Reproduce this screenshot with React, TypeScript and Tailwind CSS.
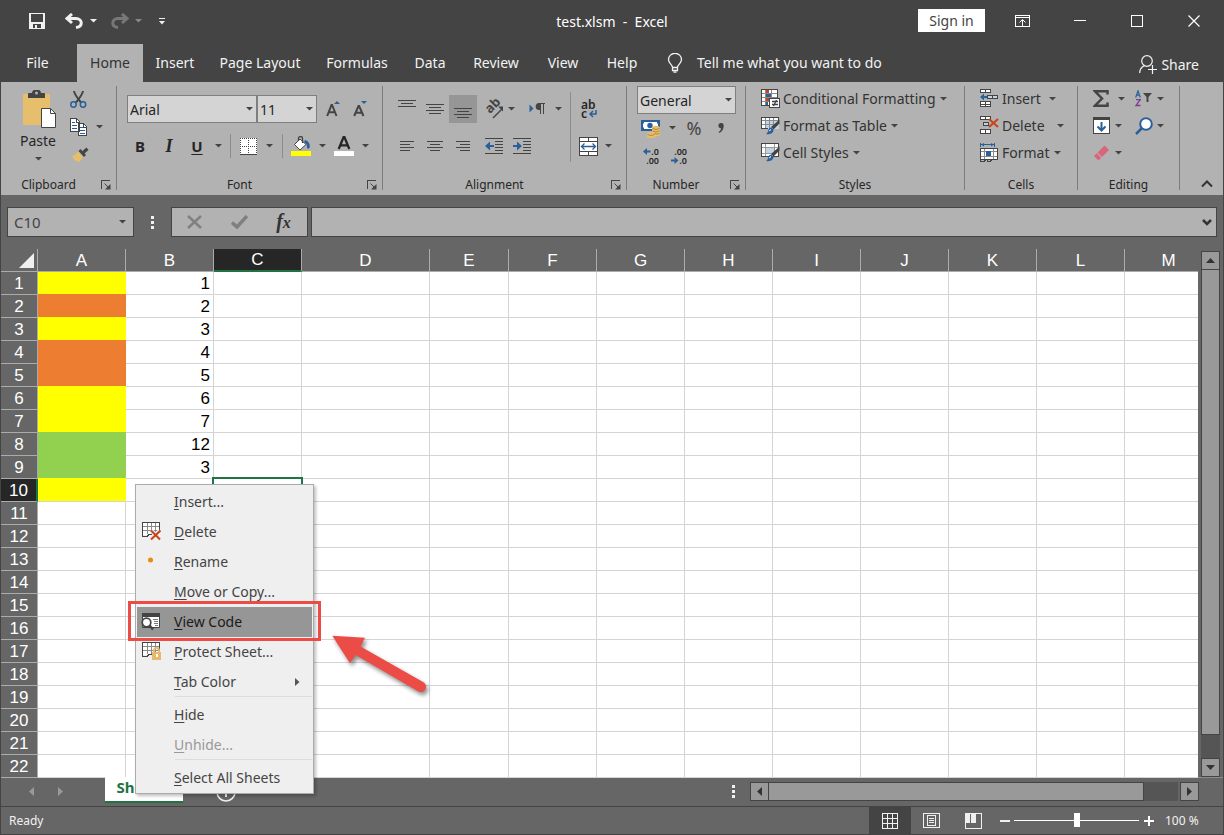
import type { ReactNode } from 'react';

const INK = '#444444';
const BLUE = '#2a6099';

function Svg({ w, h, children, smooth }: { w: number; h: number; children: ReactNode; smooth?: boolean }) {
  return (
    <svg
      width={w}
      height={h}
      viewBox={`0 0 ${w} ${h}`}
      fill="none"
      aria-hidden="true"
      className="shrink-0"
      shapeRendering={smooth ? undefined : 'crispEdges'}
    >
      {children}
    </svg>
  );
}

function Caret({ color = INK }: { color?: string }) {
  return (
    <Svg w={7} h={4} smooth>
      <path d="M0 0h7L3.500 3.500z" fill={color} />
    </Svg>
  );
}

function Tool({ label, className, children }: { label: string; className: string; children: ReactNode }) {
  return (
    <button type="button" aria-label={label} className={`flex shrink-0 items-center justify-center ${className}`}>
      {children}
    </button>
  );
}

function Divider({ className = 'bg-[#8c8c8c]' }: { className?: string }) {
  return <span className={`w-px shrink-0 ${className}`} />;
}

function Group({
  title,
  width,
  launcher,
  children,
}: {
  title: string;
  width: string;
  launcher?: boolean;
  children: ReactNode;
}) {
  return (
    <section aria-label={title} className={`flex shrink-0 pt-1 ${width}`}>
      <div className="flex min-w-0 flex-1 flex-col">
        <div className="h-[91px] shrink-0">{children}</div>
        <div className="flex h-4 items-center">
          <h2 className="flex-1 text-center text-xs leading-4 text-[#262626]">{title}</h2>
          {launcher && (
            <Tool label={`${title} settings`} className="h-4 w-5">
              <Svg w={10} h={10}>
                <path d="M0.500 9V0.500H9" stroke={INK} />
                <path d="M3.500 3.500L8 8" stroke={INK} shapeRendering="auto" />
                <path d="M9.500 4v5.500H4z" fill={INK} shapeRendering="auto" />
              </Svg>
            </Tool>
          )}
        </div>
      </div>
      <Divider className="mb-[5px] bg-[#7c7c7c]" />
    </section>
  );
}

function Combo({ label, value, className }: { label: string; value: string; className: string }) {
  return (
    <span className={`relative shrink-0 ${className}`}>
      <select
        aria-label={label}
        className="h-7 w-full appearance-none border border-[#7f7f7f] bg-[#d4d4d4] px-0.5 pt-0.5 text-sm leading-5 text-[#262626]"
      >
        <option>{value}</option>
      </select>
      <span className="pointer-events-none absolute top-3 right-1">
        <Caret />
      </span>
    </span>
  );
}

function Lines({ rows, h = 19 }: { rows: [number, number, number][]; h?: number }) {
  return (
    <Svg w={18} h={h}>
      {rows.map(([x, y, w]) => (
        <rect key={y} x={x} y={y} width={w} height={1} fill={INK} />
      ))}
    </Svg>
  );
}

function Brush() {
  return (
    <g shapeRendering="auto">
      <path d="M18.500 3.500v4l-6 6-2.500-2.500z" fill={INK} />
      <path d="M10.500 11.500l2 2.300c0 2.700-2.500 5.200-7.500 4.200 1.800-.8 1.600-2 2.200-3.800.4-1.400 1.600-2.700 3.300-2.700z" fill={BLUE} />
      <path d="M8.300 15.300c.2-1 .8-1.500 1.700-1.700" stroke="#fff" />
    </g>
  );
}

function ConditionalIcon() {
  return (
    <Svg w={19} h={19}>
      <path d="M0.500 0.500h16v16h-16z" fill="#fff" stroke={INK} />
      <path d="M1 4.500h15M1 8.500h15M1 12.500h15M4.500 1v15M10.500 1v15" stroke="#8a8a8a" />
      <path d="M5 1h3v3H5zM5 9h3v3H5z" fill="#c8421c" />
      <path d="M5 5h5v3H5zM5 13h2v3H5z" fill={BLUE} />
      <path d="M8.500 9.500h10v9h-10z" fill="#fff" stroke={INK} />
      <path d="M11 12.500h6M11 15.500h6M15.500 11l-3 6" stroke={INK} strokeWidth="1.300" shapeRendering="auto" />
    </Svg>
  );
}

function TableIcon() {
  return (
    <Svg w={19} h={19}>
      <path d="M0.500 1.500h17v11h-17z" fill="#fff" stroke={INK} />
      <path d="M5 5h13v8H5z" fill="#c3d3e6" />
      <path d="M1 4.500h16M1 8.500h16M4.500 2v11M8.500 2v11M12.500 2v11" stroke="#8a8a8a" />
      <path d="M0.500 13V1.500h17V5M0.500 12.500H7" stroke={INK} />
      <Brush />
    </Svg>
  );
}

function CellStyleIcon() {
  return (
    <Svg w={19} h={19}>
      <path d="M0.500 0.500h17v13h-17z" fill="#fff" stroke={INK} />
      <path d="M4.500 4.500h9v6h-9z" fill="#c3d3e6" stroke="#8a8a8a" />
      <path d="M1 4.500h16M4.500 1v12M1 10.500h12M13.500 1v4" stroke="#9a9a9a" />
      <Brush />
    </Svg>
  );
}

function InsertIcon() {
  return (
    <Svg w={19} h={19}>
      <path d="M0.500 0.500h10v3h-10zM0.500 12.500h10v5h-10z" fill="#fff" stroke={INK} />
      <path d="M5.500 1v2M5.500 13v4M1 15.500h9" stroke={INK} />
      <path d="M7.500 6.500h10v3h-10z" fill="#c3d3e6" stroke={INK} />
      <path d="M12.500 7v2" stroke={INK} />
      <path d="M0 8l4-3.500V7h3v2H4v2.500z" fill={BLUE} shapeRendering="auto" />
    </Svg>
  );
}

function DeleteIcon() {
  return (
    <Svg w={19} h={19}>
      <path d="M0.500 0.500h10v3h-10zM0.500 13.500h10v4h-10z" fill="#fff" stroke={INK} />
      <path d="M5.500 1v2M5.500 14v3" stroke={INK} />
      <path d="M3.500 6.500h5v3h-5z" fill="#c3d3e6" stroke={INK} />
      <path d="M9 3l9 8M18 3l-9 8" stroke="#c8421c" strokeWidth="2" shapeRendering="auto" />
    </Svg>
  );
}

function FormatIcon() {
  return (
    <Svg w={19} h={19}>
      <path d="M0.500 0v4M14.500 0v4M1 1.500h13" stroke={BLUE} />
      <path d="M4 0l-3 1.500 3 2zM11 0l3 1.500-3 2z" fill={BLUE} shapeRendering="auto" />
      <path d="M0.500 5.500h17v11h-17z" fill="#fff" stroke={INK} />
      <path d="M1 8.500h16M1 13.500h16M4.500 6v10M13.500 6v10" stroke="#8a8a8a" />
      <path d="M6 8h5v5H6z" fill={BLUE} />
      <path d="M0.500 16v2h4l2-1.500M7 16.500v2h3l2-2" stroke={INK} />
    </Svg>
  );
}

function TextTool({ icon, label, gap }: { icon: ReactNode; label: string; gap: string }) {
  return (
    <button type="button" className="flex h-[27px] items-center text-sm whitespace-nowrap text-[#333333]">
      <span className="mr-[3px]">{icon}</span>
      <span className={gap}>{label}</span>
      <Caret />
    </button>
  );
}

const tabs = [
  { name: 'File', width: 'w-[76px] pr-[3px]' },
  { name: 'Home', width: 'w-[66px]' },
  { name: 'Insert', width: 'w-16' },
  { name: 'Page Layout', width: 'w-[106px]' },
  { name: 'Formulas', width: 'w-[88px]' },
  { name: 'Data', width: 'w-[58px]' },
  { name: 'Review', width: 'w-[74px]' },
  { name: 'View', width: 'w-[60px]' },
  { name: 'Help', width: 'w-[58px]' },
];

function TitleBar() {
  return (
    <header className="grid h-11 grid-cols-[1fr_auto_1fr] items-center pb-[3px] text-white">
      <div className="flex items-center pt-px pl-6">
        <Tool label="Save" className="h-7 w-[26px]">
          <Svg w={16} h={16}>
            <path d="M0 0h16v16H0z" fill="#f0f0f0" />
            <path d="M2 1h12v8H2zM4 11h8v4H4z" fill="#444" />
            <path d="M6 12h2v3H6z" fill="#f0f0f0" />
          </Svg>
        </Tool>
        <Tool label="Undo" className="ml-[11px] h-7 w-[26px]">
          <Svg w={19} h={16} smooth>
            <path d="M7 1L2 5.500 7 10" stroke="#f0f0f0" strokeWidth="3" />
            <path d="M3 5.500h8c6.500 0 7.500 8 0 9" stroke="#f0f0f0" strokeWidth="3" />
          </Svg>
        </Tool>
        <Tool label="Undo list" className="h-7 w-3">
          <Caret color="#f0f0f0" />
        </Tool>
        <Tool label="Redo" className="ml-[7px] h-7 w-[26px]">
          <Svg w={19} h={16} smooth>
            <path d="M12 1l5 4.500-5 4.500" stroke="#777" strokeWidth="3" />
            <path d="M16 5.500H8c-6.500 0-7.500 8 0 9" stroke="#777" strokeWidth="3" />
          </Svg>
        </Tool>
        <Tool label="Redo list" className="h-7 w-3">
          <Caret color="#888" />
        </Tool>
        <Tool label="Customize toolbar" className="ml-3 h-7 w-3">
          <Svg w={6} h={7}>
            <path d="M0 0h6v1H0z" fill="#f0f0f0" />
            <path d="M0 3h6L3 6.500z" fill="#f0f0f0" shapeRendering="auto" />
          </Svg>
        </Tool>
      </div>
      <h1 className="pt-0.5 text-sm leading-5 whitespace-pre">test.xlsm  -  Excel</h1>
      <div className="flex items-center justify-end">
        <button type="button" className="mr-2 h-[23px] w-[67px] bg-white text-sm leading-5 text-[#444444]">
          Sign in
        </button>
        <Tool label="Ribbon display options" className="h-7 w-[59px]">
          <Svg w={15} h={12}>
            <path d="M0.500 0.500h14v11h-14zM1 2.500h13" stroke="#fff" />
            <path d="M7.500 5v6" stroke="#fff" />
            <path d="M4.500 7.500l3-3 3 3" stroke="#fff" shapeRendering="auto" />
          </Svg>
        </Tool>
        <Tool label="Minimize" className="h-7 w-14">
          <Svg w={12} h={1}>
            <path d="M0 0h12v1H0z" fill="#fff" />
          </Svg>
        </Tool>
        <Tool label="Maximize" className="h-7 w-[57px]">
          <Svg w={12} h={12}>
            <path d="M0.500 0.500h11v11h-11z" stroke="#fff" />
          </Svg>
        </Tool>
        <Tool label="Close" className="mr-px h-7 w-[58px]">
          <Svg w={12} h={12} smooth>
            <path d="M0.500 0.500l11 11M11.500 0.500l-11 11" stroke="#fff" strokeWidth="1.200" />
          </Svg>
        </Tool>
      </div>
    </header>
  );
}

function TabBar() {
  return (
    <nav aria-label="Ribbon tabs" className="flex h-[38px] pl-px text-sm text-[#f2f2f2]">
      {tabs.map((tab) => (
        <button
          key={tab.name}
          type="button"
          className={`shrink-0 whitespace-nowrap ${tab.width} ${tab.name === 'Home' ? 'bg-[#b2b2b2] text-[#333333]' : ''}`}
        >
          {tab.name}
        </button>
      ))}
      <button type="button" className="ml-4 flex items-center gap-3.5 whitespace-nowrap">
        <Svg w={16} h={20} smooth>
          <path
            d="M5.500 14.500c0-3-4-4-4-8a6.500 6.200 0 0 1 13 0c0 4-4 5-4 8zM5.500 14.500h5v3h-5zM6.500 19.200h3"
            stroke="#f2f2f2"
            strokeWidth="1.300"
          />
        </Svg>
        Tell me what you want to do
      </button>
      <button type="button" className="mr-[25px] ml-auto flex items-center gap-1 pt-[3px] whitespace-nowrap">
        <Svg w={18} h={19} smooth>
          <circle cx="8" cy="6" r="5.300" stroke="#f2f2f2" strokeWidth="1.200" />
          <path d="M0.700 18c0-3.500 1.800-6 4.600-7.300M9 14.500h9M13.500 10v9" stroke="#f2f2f2" strokeWidth="1.200" />
        </Svg>
        Share
      </button>
    </nav>
  );
}

function Ribbon() {
  return (
    <div className="flex h-[113px] bg-[#b2b2b2] text-[#262626]">
      <Group title="Clipboard" width="w-[116px]" launcher>
        <div className="flex pl-4">
          <button type="button" className="flex w-[42px] flex-col items-center pt-1 text-sm leading-5">
            <Svg w={36} h={40} smooth>
              <path d="M3 5a1 1 0 0 1 1-1h25a1 1 0 0 1 1 1v29a1 1 0 0 1-1 1H4a1 1 0 0 1-1-1z" fill="#e6be6c" />
              <path d="M8 8V4a1 1 0 0 1 1-1h3a4.500 3.500 0 0 1 9 0h3a1 1 0 0 1 1 1v4z" fill={INK} />
              <circle cx="16.500" cy="3" r="1.500" fill="#b2b2b2" />
              <path d="M21.500 18.500h9l5 5v14h-14z" fill="#fff" stroke={INK} />
              <path d="M30.500 18.500v5h5" stroke={INK} />
            </Svg>
            <span className="mt-px mb-1.5">Paste</span>
            <Caret />
          </button>
          <div className="-mt-px flex flex-col pl-[9px]">
            <Tool label="Cut" className="h-[27px] w-5">
              <Svg w={17} h={18} smooth>
                <path d="M4 1c.3 3 2.500 6 7 11.500M13 1c-.3 3-2.500 6-7 11.500" stroke={INK} strokeWidth="2" />
                <circle cx="3.500" cy="14.500" r="2.700" stroke={BLUE} strokeWidth="1.500" />
                <circle cx="13" cy="14.500" r="2.700" stroke={BLUE} strokeWidth="1.500" />
              </Svg>
            </Tool>
            <div className="flex">
              <Tool label="Copy" className="h-[29px] w-[22px]">
                <Svg w={18} h={18}>
                  <path d="M0.500 0.500h6l3 3v10h-9zM8.500 5.500h5l3 3v9h-8z" fill="#fff" stroke={INK} />
                  <path d="M2 4.500h3M2 7.500h5M2 10.500h5M10 9.500h3M10 12.500h5M10 15.500h5" stroke={BLUE} />
                  <path d="M6.500 1v3H9M13.500 6v3H16" stroke={INK} />
                </Svg>
              </Tool>
              <Tool label="Copy options" className="h-[29px] w-[19px]">
                <Caret />
              </Tool>
            </div>
            <Tool label="Format painter" className="h-[27px] w-[24px]">
              <Svg w={18} h={16} smooth>
                <path d="M7 4.500l5 6-4 4.500c-3-.5-5.500-2.500-7-6 2.500-.5 4-2 6-4.500z" fill="#e6be6c" />
                <path d="M7.500 4l2-2 5.500 6-2 2zM11.500 4l4-3.500L17.500 3l-4 3.500z" fill={INK} />
              </Svg>
            </Tool>
          </div>
        </div>
      </Group>

      <Group title="Font" width="w-[266px]" launcher>
        <div className="flex items-center pt-[9px] pl-2.5">
          <Combo label="Font family" value="Arial" className="w-[130px]" />
          <Combo label="Font size" value="11" className="w-[60px]" />
          <Tool label="Grow font" className="ml-0.5 h-7 w-[27px]">
            <Svg w={14} h={17} smooth>
              <path d="M1.200 15L5.500 4h.6L10.500 15M3 11.300h6" stroke={INK} strokeWidth="2" />
              <path d="M8 3l3-3 3 3z" fill={BLUE} />
            </Svg>
          </Tool>
          <Tool label="Shrink font" className="h-7 w-[27px]">
            <Svg w={14} h={17} smooth>
              <path d="M1.200 15L5.500 5h.6L10.500 15M3 11.800h6" stroke={INK} strokeWidth="2" />
              <path d="M8 0l3 3 3-3z" fill={BLUE} />
            </Svg>
          </Tool>
        </div>
        <div className="flex items-center pt-[9px] pl-[9px] text-[15px] leading-5">
          <Tool label="Bold" className="h-7 w-7">
            <b>B</b>
          </Tool>
          <Tool label="Italic" className="h-7 w-[30px] font-['Liberation_Serif',serif] text-lg">
            <b>
              <i>I</i>
            </b>
          </Tool>
          <Tool label="Underline" className="h-7 w-[26px]">
            <b className="underline underline-offset-2">U</b>
          </Tool>
          <Tool label="Underline style" className="h-7 w-4">
            <Caret />
          </Tool>
          <Divider className="ml-1 h-6 bg-[#8c8c8c]" />
          <Tool label="Borders" className="ml-[5px] h-7 w-[25px]">
            <Svg w={17} h={17}>
              <path d="M0 0h17v17H0z" fill="#fff" />
              <path d="M0 0.500h17M0 8.500h17M0.500 0v17M8.500 0v17M16.500 0v17" stroke={INK} strokeDasharray="1 1" />
              <path d="M0 16h17v1H0z" fill={INK} />
            </Svg>
          </Tool>
          <Tool label="Border style" className="h-7 w-[17px]">
            <Caret />
          </Tool>
          <Divider className="ml-1 h-6 bg-[#8c8c8c]" />
          <Tool label="Fill color" className="ml-[5px] h-7 w-[26px]">
            <Svg w={20} h={20} smooth>
              <path d="M0 15h20v5H0z" fill="#ffff00" />
              <path d="M14 4c4 1 5.500 5 4.500 8-1.500 1.500-2.500.5-2.500-1 0-3-1.500-4-3-5z" fill={BLUE} />
              <path d="M9 3l6 5.500-6 5.500-5.500-5.500z" fill="#fff" stroke={INK} />
              <path d="M7.500 5V2a2 1.500 0 0 1 4 0v5" stroke={INK} strokeWidth="1.300" />
            </Svg>
          </Tool>
          <Tool label="Fill color list" className="h-7 w-4">
            <Caret />
          </Tool>
          <Tool label="Font color" className="h-7 w-7">
            <Svg w={20} h={20} smooth>
              <path d="M0 15h20v5H0z" fill="#fff" />
              <path d="M4.700 13L9.600 1h.8L15.300 13M6.800 9.300h6.400" stroke="#262626" strokeWidth="2.300" />
            </Svg>
          </Tool>
          <Tool label="Font color list" className="h-7 w-3.5">
            <Caret />
          </Tool>
        </div>
      </Group>

      <Group title="Alignment" width="w-[244px]" launcher>
        <div className="flex pl-2.5">
          <div className="flex w-[177px] flex-col gap-[9px] pt-[9px]">
            <div className="flex items-center">
              <Tool label="Top align" className="h-7 w-7">
                <Lines rows={[[0, 0, 18], [3, 3, 12], [0, 6, 18]]} />
              </Tool>
              <Tool label="Middle align" className="h-7 w-7">
                <Lines rows={[[0, 4, 18], [3, 7, 12], [0, 10, 18], [3, 13, 12]]} />
              </Tool>
              <Tool label="Bottom align" className="h-7 w-7 bg-[#969696]">
                <Lines rows={[[0, 8, 18], [3, 11, 12], [0, 14, 18], [3, 17, 12]]} />
              </Tool>
              <Tool label="Orientation" className="ml-[3px] h-7 w-7">
                <svg width="20" height="20" viewBox="0 0 20 20" aria-hidden="true" className="overflow-visible">
                  <text transform="translate(6 15) rotate(-45)" fontSize="13" fontWeight="700" fill={INK}>
                    ab
                  </text>
                  <path d="M9 19L18 10" stroke={INK} strokeWidth="1.500" fill="none" />
                  <path d="M19 7.500v5l-5-5z" fill={INK} />
                </svg>
              </Tool>
              <Tool label="Orientation list" className="h-7 w-[7px]">
                <Caret />
              </Tool>
              <Tool label="Text direction" className="ml-2 h-7 w-7">
                <Svg w={16} h={12}>
                  <path d="M0.500 1.500v8l4-4z" fill={BLUE} shapeRendering="auto" />
                  <path d="M11 0v7h-1C5.500 7 5.500 0 10 0z" fill={INK} shapeRendering="auto" />
                  <path d="M10 0.500h6M11.500 0v11M14.500 0v11" stroke={INK} />
                </Svg>
              </Tool>
              <Tool label="Text direction list" className="h-7 w-3.5">
                <Caret />
              </Tool>
            </div>
            <div className="flex items-center">
              <Tool label="Align left" className="h-7 w-7">
                <Lines rows={[[2, 4, 14], [2, 7, 10], [2, 10, 14], [2, 13, 10]]} />
              </Tool>
              <Tool label="Center" className="h-7 w-7">
                <Lines rows={[[1, 4, 16], [4, 7, 10], [1, 10, 16], [4, 13, 10]]} />
              </Tool>
              <Tool label="Align right" className="h-7 w-7">
                <Lines rows={[[2, 4, 14], [6, 7, 10], [2, 10, 14], [6, 13, 10]]} />
              </Tool>
              <Tool label="Decrease indent" className="ml-[3px] h-7 w-7">
                <Svg w={18} h={16}>
                  <path d="M0 0.500h18M10 3.500h8M10 6.500h8M10 9.500h8M10 12.500h8M0 15.500h18" stroke={INK} />
                  <path d="M0 8l5-4.500V7h4v2H5v3.500z" fill={BLUE} shapeRendering="auto" />
                </Svg>
              </Tool>
              <Tool label="Increase indent" className="h-7 w-7">
                <Svg w={18} h={16}>
                  <path d="M0 0.500h18M10 3.500h8M10 6.500h8M10 9.500h8M10 12.500h8M0 15.500h18" stroke={INK} />
                  <path d="M9 8L4 3.500V7H0v2h4v3.500z" fill={BLUE} shapeRendering="auto" />
                </Svg>
              </Tool>
            </div>
          </div>
          <Divider className="mt-1.5 h-[70px] bg-[#8c8c8c]" />
          <div className="flex flex-col gap-[9px] pt-[9px] pl-1.5">
            <button type="button" aria-label="Wrap text" className="h-7 w-6 pl-1 text-left text-xs leading-[9px] font-semibold">
              <span className="block">ab</span>
              <span className="flex items-center gap-0.5">
                c
                <Svg w={8} h={8} smooth>
                  <path d="M7 0v4H1M4 1L1 4l3 3" stroke={BLUE} strokeWidth="1.500" />
                </Svg>
              </span>
            </button>
            <div className="flex">
              <Tool label="Merge and center" className="h-7 w-[22px]">
                <Svg w={19} h={19}>
                  <path d="M0.500 0.500h18v18h-18z" fill="#fff" stroke={INK} />
                  <path d="M1 4.500h17M1 14.500h17M9.500 1v4M9.500 14v4" stroke={INK} />
                  <path d="M3 9.500h13M5.500 6.500l-3 3 3 3M13.500 6.500l3 3-3 3" stroke={BLUE} shapeRendering="auto" strokeWidth="1.300" />
                </Svg>
              </Tool>
              <Tool label="Merge list" className="h-7 w-[19px]">
                <Caret />
              </Tool>
            </div>
          </div>
        </div>
      </Group>

      <Group title="Number" width="w-[119px]" launcher>
        <div className="flex pl-2.5">
          <Combo label="Number format" value="General" className="w-[99px]" />
        </div>
        <div className="flex items-center pl-2.5 leading-5">
          <Tool label="Currency" className="h-7 w-[27px]">
            <Svg w={19} h={19} smooth>
              <path d="M0 1h19v11H0z" fill={BLUE} />
              <path d="M3 3h13v1l1 1v3l-1 1v1H3V9L2 8V5l1-1z" fill="#fff" />
              <circle cx="9" cy="6.500" r="2.700" fill={BLUE} />
              <path d="M11 8.500a4 1.700 0 0 1 8 0v7a4 1.700 0 0 1-8 0zM6 14.500a4 1.500 0 0 1 8 0v3a4 1.500 0 0 1-8 0z" fill="#e6be6c" />
              <path d="M11.500 9.500q3.500 2 7 0M11.500 12q3.500 2 7 0M13.500 14.500q3 1 5 0M6.500 15.500q3.500 2 7 0" stroke="#b58a42" />
            </Svg>
          </Tool>
          <Tool label="Currency list" className="h-7 w-4">
            <Caret />
          </Tool>
          <Tool label="Percent style" className="h-7 w-7 text-lg text-[#444444]">
            %
          </Tool>
          <Tool label="Comma style" className="h-7 w-[26px]">
            <Svg w={6} h={10} smooth>
              <path d="M3 0a2.500 2.500 0 0 1 2.700 2.700C5.700 6 4 9 1 10L.5 9C2.300 8 3 6.500 3 5.200A2.500 2.500 0 0 1 3 0z" fill={INK} />
            </Svg>
          </Tool>
        </div>
        <div className="flex items-center pl-2.5 text-[9px] leading-[9px] font-semibold">
          <button type="button" aria-label="Increase decimal" className="flex h-7 w-7 flex-col items-end justify-center pr-1.5">
            <span className="flex items-center">
              <Svg w={8} h={7} smooth>
                <path d="M0 3.500L4 0v2.500h3.500v2H4V7z" fill={BLUE} />
              </Svg>
              .0
            </span>
            <span>.00</span>
          </button>
          <button type="button" aria-label="Decrease decimal" className="flex h-7 w-7 flex-col items-end justify-center pr-1.5">
            <span>.00</span>
            <span className="flex items-center">
              <Svg w={8} h={7} smooth>
                <path d="M7.500 3.500L3.500 0v2.500H0v2h3.500V7z" fill={BLUE} />
              </Svg>
              .0
            </span>
          </button>
        </div>
      </Group>

      <Group title="Styles" width="w-[219px]">
        <div className="-mt-px flex flex-col pl-[15px]">
          <TextTool icon={<ConditionalIcon />} label="Conditional Formatting" gap="mr-1" />
          <TextTool icon={<TableIcon />} label="Format as Table" gap="mr-1" />
          <TextTool icon={<CellStyleIcon />} label="Cell Styles" gap="mr-1" />
        </div>
      </Group>

      <Group title="Cells" width="w-[113px]">
        <div className="-mt-px flex flex-col pl-[15px]">
          <TextTool icon={<InsertIcon />} label="Insert" gap="mr-2" />
          <TextTool icon={<DeleteIcon />} label="Delete" gap="mr-3" />
          <TextTool icon={<FormatIcon />} label="Format" gap="mr-1" />
        </div>
      </Group>

      <Group title="Editing" width="w-[102px]">
        <div className="-mt-px grid grid-cols-[36px_auto] justify-start gap-x-2 pl-[9px]">
          <div className="flex">
            <Tool label="AutoSum" className="h-[27px] w-7">
              <Svg w={16} h={17} smooth>
                <path d="M14.500 4.500V1.300H2L9 8.500l-7 7.200h12.500v-3.200" stroke={INK} strokeWidth="2.500" />
              </Svg>
            </Tool>
            <Tool label="AutoSum list" className="h-[27px] w-3">
              <Caret />
            </Tool>
          </div>
          <div className="flex">
            <Tool label="Sort and filter" className="h-[27px] w-[26px]">
              <Svg w={18} h={17} smooth>
                <path d="M0.700 7.500L3 .8 5.300 7.500M1.500 5.200h3" stroke={BLUE} strokeWidth="1.200" />
                <path d="M1 9.600h4.200L1 15.500h4.500" stroke="#7b3f98" strokeWidth="1.300" />
                <path d="M8 3h9l-3.500 4v5h-2V7z" fill={INK} />
              </Svg>
            </Tool>
            <Tool label="Sort list" className="h-[27px] w-[7px]">
              <Caret />
            </Tool>
          </div>
          <div className="flex">
            <Tool label="Fill" className="h-[27px] w-7">
              <Svg w={17} h={17}>
                <path d="M0.500 0.500h16v16h-16z" fill="#fff" stroke={INK} />
                <path d="M0 0h17v3H0z" fill={INK} />
                <path d="M8.500 5v8M4.500 9.500l4 4 4-4" stroke={BLUE} strokeWidth="2" shapeRendering="auto" />
              </Svg>
            </Tool>
            <Tool label="Fill list" className="h-[27px] w-[7px]">
              <Caret />
            </Tool>
          </div>
          <div className="flex">
            <Tool label="Find and select" className="h-[27px] w-[26px]">
              <Svg w={18} h={18} smooth>
                <circle cx="11" cy="7" r="5.800" fill="#fff" stroke={BLUE} strokeWidth="2" />
                <path d="M6.500 11.500L1 17" stroke={BLUE} strokeWidth="2.500" />
              </Svg>
            </Tool>
            <Tool label="Find list" className="h-[27px] w-[7px]">
              <Caret />
            </Tool>
          </div>
          <div className="flex">
            <Tool label="Clear" className="h-[27px] w-7">
              <Svg w={17} h={16} smooth>
                <path d="M11.500 .5l4.500 4.500-7 7L4.500 7.500zM3.700 8.300l4.500 4.500L5.500 15.500 1 11z" fill="#d9657b" />
              </Svg>
            </Tool>
            <Tool label="Clear list" className="h-[27px] w-[7px]">
              <Caret />
            </Tool>
          </div>
        </div>
      </Group>

      <div className="flex flex-1 items-end justify-end pr-2 pb-[3px]">
        <Tool label="Collapse the ribbon" className="h-4 w-4">
          <Svg w={12} h={8} smooth>
            <path d="M1 6.500l5-5 5 5" stroke="#333" strokeWidth="2" />
          </Svg>
        </Tool>
      </div>
    </div>
  );
}

function Dots() {
  return (
    <Svg w={3} h={13}>
      <path d="M0 0h3v3H0zM0 5h3v3H0zM0 10h3v3H0z" fill="#f0f0f0" />
    </Svg>
  );
}

function FormulaBar() {
  return (
    <div className="flex h-[54px] items-center px-1.5">
      <span className="relative w-[127px] shrink-0">
        <input
          aria-label="Name box"
          defaultValue="C10"
          className="block h-[30px] w-full border border-[#444444] bg-[#b2b2b2] px-1.5 text-[15px] text-[#444444]"
        />
        <span className="pointer-events-none absolute top-[13px] right-2">
          <Caret />
        </span>
      </span>
      <span className="flex w-[37px] shrink-0 justify-center">
        <Dots />
      </span>
      <div className="flex h-[30px] w-[137px] shrink-0 items-center border border-[#444444] bg-[#b2b2b2]">
        <Tool label="Cancel" className="h-7 w-11">
          <Svg w={15} h={14} smooth>
            <path d="M1 1l13 12M14 1L1 13" stroke="#808080" strokeWidth="2.500" />
          </Svg>
        </Tool>
        <Tool label="Enter" className="h-7 w-[46px]">
          <Svg w={17} h={14} smooth>
            <path d="M1 7.500l5 4.500L16 1" stroke="#808080" strokeWidth="3.500" />
          </Svg>
        </Tool>
        <Tool label="Insert function" className="h-7 flex-1 pr-0.5 font-['Liberation_Serif',serif] text-xl leading-6 text-[#333333]">
          <b>
            <i>
              f<span className="text-base">x</span>
            </i>
          </b>
        </Tool>
      </div>
      <span className="relative ml-[3px] flex-1">
        <input aria-label="Formula" className="block h-[30px] w-full border border-[#444444] bg-[#b2b2b2] px-2 text-sm" />
        <span className="pointer-events-none absolute top-3 right-[5px]">
          <Svg w={10} h={7} smooth>
            <path d="M1 1l4 4 4-4" stroke="#333" strokeWidth="2.500" />
          </Svg>
        </span>
      </span>
    </div>
  );
}

const columns = [
  { name: 'A', width: 'w-[88px]' },
  { name: 'B', width: 'w-[88px]' },
  { name: 'C', width: 'w-[88px]' },
  { name: 'D', width: 'w-32' },
  { name: 'E', width: 'w-[79px]' },
  { name: 'F', width: 'w-[88px]' },
  { name: 'G', width: 'w-[88px]' },
  { name: 'H', width: 'w-[88px]' },
  { name: 'I', width: 'w-[88px]' },
  { name: 'J', width: 'w-[88px]' },
  { name: 'K', width: 'w-[88px]' },
  { name: 'L', width: 'w-[88px]' },
  { name: 'M', width: 'w-[88px]' },
];

const YELLOW = 'bg-[#ffff00]';
const ORANGE = 'bg-[#ed7d31]';
const GREEN = 'bg-[#92d050]';

const rows: { fill?: string; edge?: string; value?: string }[] = [
  { fill: YELLOW, edge: 'border-[#ed7d31]', value: '1' },
  { fill: ORANGE, edge: 'border-[#ffff00]', value: '2' },
  { fill: YELLOW, edge: 'border-[#ed7d31]', value: '3' },
  { fill: ORANGE, edge: 'border-[#ed7d31]', value: '4' },
  { fill: ORANGE, edge: 'border-[#ffff00]', value: '5' },
  { fill: YELLOW, edge: 'border-[#ffff00]', value: '6' },
  { fill: YELLOW, edge: 'border-[#92d050]', value: '7' },
  { fill: GREEN, edge: 'border-[#92d050]', value: '12' },
  { fill: GREEN, edge: 'border-[#ffff00]', value: '3' },
  { fill: YELLOW, edge: 'border-[#d4d4d4]' },
  ...Array.from({ length: 12 }, () => ({})),
];

const CELL = 'border-r border-b border-[#d4d4d4] p-0';

function Grid() {
  return (
    <div className="min-w-0 flex-1 overflow-hidden">
      <table className="w-[1176px] table-fixed border-separate border-spacing-0 bg-white font-['Liberation_Sans',Arial,sans-serif] text-[17px] leading-5 text-black">
        <colgroup>
          <col className="w-[37px]" />
          {columns.map((c) => (
            <col key={c.name} className={c.width} />
          ))}
        </colgroup>
        <thead>
          <tr className="h-[23px] bg-[#666666] text-white">
            <td className="border-r border-b border-[#ababab] p-0">
              <span className="flex justify-end pr-[3px]">
                <Svg w={15} h={15} smooth>
                  <path d="M15 0v15H0z" fill="#f0f0f0" />
                </Svg>
              </span>
            </td>
            {columns.map((c) => (
              <th
                key={c.name}
                scope="col"
                className={
                  c.name === 'C'
                    ? 'border-r border-b-2 border-r-[#ababab] border-b-[#217346] bg-[#262626] p-0 pt-px leading-5 font-normal'
                    : 'border-r border-b border-[#ababab] p-0 pt-0.5 font-normal'
                }
              >
                {c.name}
              </th>
            ))}
          </tr>
        </thead>
        <tbody>
          {rows.map((row, i) => (
            <tr key={i} className="h-[23px]">
              <th
                scope="row"
                className={
                  i === 9
                    ? 'border-r-2 border-b border-r-[#217346] border-b-[#ababab] bg-[#262626] p-0 pt-0.5 font-normal text-white'
                    : 'border-r border-b border-[#ababab] bg-[#666666] p-0 pt-0.5 font-normal text-white'
                }
              >
                {i + 1}
              </th>
              {columns.map((c) => {
                if (c.name === 'A') {
                  return row.fill ? (
                    <td key="A" className="p-0">
                      <div className={`h-[23px] border-b ${row.fill} ${row.edge}`} />
                    </td>
                  ) : (
                    <td key="A" className={CELL} />
                  );
                }
                if (c.name === 'B') {
                  return (
                    <td key="B" className="border-r border-b border-[#d4d4d4] p-0 pt-0.5 text-right">
                      <span className="pr-[3px]">{row.value}</span>
                    </td>
                  );
                }
                if (c.name === 'C' && i === 9) {
                  return (
                    <td key="C" className={`${CELL} relative`}>
                      <span className="absolute -inset-0.5 border-2 border-[#217346]" />
                    </td>
                  );
                }
                return <td key={c.name} className={CELL} />;
              })}
            </tr>
          ))}
        </tbody>
      </table>
    </div>
  );
}

const SCROLL_BUTTON = 'h-[19px] w-[19px] border border-[#444444] bg-[#999999]';

function VerticalScroll() {
  return (
    <div className="ml-[3px] flex w-[19px] shrink-0 flex-col pt-0.5 pb-px">
      <Tool label="Scroll up" className={SCROLL_BUTTON}>
        <Svg w={9} h={5} smooth>
          <path d="M4.500 0L9 5H0z" fill="#333" />
        </Svg>
      </Tool>
      <div className="flex flex-1 flex-col bg-[#555555] pb-[23px]">
        <div className="-mt-px flex-1 border border-[#444444] bg-[#999999]" />
      </div>
      <Tool label="Scroll down" className={SCROLL_BUTTON}>
        <Svg w={9} h={5} smooth>
          <path d="M4.500 5L0 0h9z" fill="#333" />
        </Svg>
      </Tool>
    </div>
  );
}

function SheetBar() {
  return (
    <div className="-mt-px flex h-[29px] items-start border-t border-[#8c8c8c] bg-[#666666]">
      <Tool label="Previous sheet" className="ml-4 h-[27px] w-[29px]">
        <Svg w={5} h={9} smooth>
          <path d="M5 0v9L0 4.500z" fill="#999" />
        </Svg>
      </Tool>
      <Tool label="Next sheet" className="h-[27px] w-[29px]">
        <Svg w={5} h={9} smooth>
          <path d="M0 0v9l5-4.500z" fill="#999" />
        </Svg>
      </Tool>
      <button
        type="button"
        className="-mt-px ml-[30px] h-[26px] w-[78px] border-b-2 border-[#217346] bg-white pr-1 pb-1 text-[15px] leading-5 font-bold text-[#217346]"
      >
        Sheet1
      </button>
      <Tool label="New sheet" className="ml-[30px] h-[27px] w-[26px]">
        <Svg w={20} h={20} smooth>
          <circle cx="10" cy="10" r="9" stroke="#f0f0f0" strokeWidth="1.500" />
          <path d="M10 5v10M5 10h10" stroke="#f0f0f0" strokeWidth="2" />
        </Svg>
      </Tool>
      <div className="ml-auto flex w-[491px] items-center pt-1">
        <Dots />
        <Tool label="Scroll left" className={`ml-[15px] ${SCROLL_BUTTON}`}>
          <Svg w={5} h={9} smooth>
            <path d="M5 0v9L0 4.500z" fill="#333" />
          </Svg>
        </Tool>
        <div className="h-[19px] flex-1 bg-[#555555] pr-[34px]">
          <div className="-ml-px h-full border border-[#444444] bg-[#999999]" />
        </div>
        <Tool label="Scroll right" className={`mr-6 ml-0.5 ${SCROLL_BUTTON}`}>
          <Svg w={5} h={9} smooth>
            <path d="M0 0v9l5-4.500z" fill="#333" />
          </Svg>
        </Tool>
      </div>
    </div>
  );
}

function StatusBar() {
  return (
    <footer className="flex h-[29px] items-center border-y border-[#444444] text-[#f2f2f2]">
      <p className="flex-1 pl-2 text-xs">Ready</p>
      <Tool label="Normal view" className="h-full w-[42px] bg-[#444444]">
        <Svg w={16} h={16}>
          <path d="M0.500 0.500h15v15h-15zM0 5.500h16M0 10.500h16M5.500 0v16M10.500 0v16" stroke="#f0f0f0" />
        </Svg>
      </Tool>
      <Tool label="Page layout view" className="h-full w-[41px]">
        <Svg w={17} h={15}>
          <path d="M0.500 0.500h16v14h-16zM4.500 2.500h8v10h-8zM6 5.500h5M6 7.500h5M6 9.500h5" stroke="#f0f0f0" />
        </Svg>
      </Tool>
      <Tool label="Page break preview" className="h-full w-[43px]">
        <Svg w={17} h={16}>
          <path d="M0.500 0.500h16v15h-16z" stroke="#f0f0f0" />
          <path d="M0 0h5v10H0zM6 0h5v10H6z" fill="#f0f0f0" />
        </Svg>
      </Tool>
      <Tool label="Zoom out" className="h-full w-[19px]">
        <Svg w={10} h={2}>
          <path d="M0 0h10v2H0z" fill="#f0f0f0" />
        </Svg>
      </Tool>
      <input
        type="range"
        aria-label="Zoom"
        min={0}
        max={100}
        defaultValue={50}
        className="h-4 w-[125px] appearance-none bg-transparent [&::-webkit-slider-runnable-track]:h-px [&::-webkit-slider-runnable-track]:bg-white [&::-webkit-slider-thumb]:-mt-[7px] [&::-webkit-slider-thumb]:h-[14px] [&::-webkit-slider-thumb]:w-[6px] [&::-webkit-slider-thumb]:appearance-none [&::-webkit-slider-thumb]:bg-white"
      />
      <Tool label="Zoom in" className="h-full w-[19px]">
        <Svg w={10} h={10}>
          <path d="M0 4h10v2H0zM4 0h2v10H4z" fill="#fff" />
        </Svg>
      </Tool>
      <p className="w-[65px] pl-[7px] text-xs whitespace-nowrap">100 %</p>
    </footer>
  );
}

function SheetGlyph({ children }: { children?: ReactNode }) {
  return (
    <Svg w={20} h={21}>
      <path d="M1.500 0.500h17v12h-17z" fill="#fff" />
      <path d="M2 4.500h17M2 8.500h17M6.500 0v12M10.500 0v12M14.500 0v12" stroke="#8a8a8a" />
      <path d="M1.500 15V0.500h17V8M1 14.500h5l2-2h3" stroke={INK} />
      {children}
    </Svg>
  );
}

const deleteGlyph = (
  <SheetGlyph>
    <path d="M10 8.500l9 9M19 8.500l-9 9" stroke="#efefef" strokeWidth="4" shapeRendering="auto" />
    <path d="M10 8.500l9 9M19.500 8.500l-9.500 9" stroke="#c8421c" strokeWidth="2" shapeRendering="auto" />
  </SheetGlyph>
);

const lockGlyph = (
  <SheetGlyph>
    <path d="M11 10h9v8h-9z" fill="#e6b96c" />
    <path d="M13 10V8.500a2.500 2.500 0 0 1 5 0V10" stroke="#e6b96c" strokeWidth="1.800" shapeRendering="auto" />
    <path d="M15 12h1.500v3H15z" fill="#fff" />
  </SheetGlyph>
);

const codeGlyph = (
  <Svg w={20} h={19} smooth>
    <path d="M1.500 1.500h17v13h-17z" fill="#fff" stroke={INK} />
    <path d="M1 0h18v4H1z" fill={INK} />
    <path d="M12 6.500h5M13 8.500h4M13 10.500h4M14 12.500h3" stroke="#777" />
    <circle cx="5.500" cy="9.500" r="4.300" fill="#fff" stroke={INK} strokeWidth="1.700" />
    <path d="M8.500 12.500L12 16.500" stroke={INK} strokeWidth="2.500" />
  </Svg>
);

const dotGlyph = (
  <Svg w={20} h={19} smooth>
    <circle cx="9.500" cy="7" r="2.500" fill="#ea8a12" />
  </Svg>
);

const menu: { label: string; icon?: ReactNode; state?: 'active' | 'off'; sub?: boolean; line?: boolean }[] = [
  { label: 'Insert...' },
  { label: 'Delete', icon: deleteGlyph },
  { label: 'Rename', icon: dotGlyph },
  { label: 'Move or Copy...' },
  { label: 'View Code', icon: codeGlyph, state: 'active' },
  { label: 'Protect Sheet...', icon: lockGlyph },
  { label: 'Tab Color', sub: true, line: true },
  { label: 'Hide' },
  { label: 'Unhide...', state: 'off', line: true },
  { label: 'Select All Sheets' },
];

function ContextMenu() {
  return (
    <ul
      role="menu"
      className="absolute top-[484px] left-[135px] w-[179px] border border-[#ababab] bg-[#efefef] px-px pt-0.5 text-sm leading-5 shadow-[2px_2px_3px_rgba(0,0,0,0.25)]"
    >
      {menu.map((item) => (
        <li key={item.label} role="none">
          <button
            type="button"
            role="menuitem"
            disabled={item.state === 'off'}
            className={`flex h-[30px] w-full items-center pl-1 text-left whitespace-nowrap ${
              item.state === 'active' ? 'bg-[#969696] text-[#1a1a1a]' : item.state === 'off' ? 'text-[#999999]' : 'text-[#444444]'
            }`}
          >
            <span className="w-[33px] shrink-0">{item.icon}</span>
            <span className="flex-1">
              <u className="underline-offset-2">{item.label[0]}</u>
              {item.label.slice(1)}
            </span>
            {item.sub && (
              <span className="pr-3">
                <Svg w={5} h={8} smooth>
                  <path d="M0 0v8l4.500-4z" fill="#555" />
                </Svg>
              </span>
            )}
          </button>
          {item.line && <div className="-mt-px mb-[3px] ml-[38px] h-px bg-[#dcdcdc]" />}
        </li>
      ))}
    </ul>
  );
}

export default function App() {
  return (
    <div className="relative min-h-screen overflow-hidden bg-[#444444] font-['Noto_Sans',sans-serif]">
      <TitleBar />
      <TabBar />
      <main className="border-x border-[#444444] bg-[#666666]">
        <Ribbon />
        <FormulaBar />
        <div className="flex pr-[3px]">
          <Grid />
          <VerticalScroll />
        </div>
        <SheetBar />
        <StatusBar />
      </main>
      <ContextMenu />
      <div className="pointer-events-none absolute top-[601px] left-[128px] h-10 w-[193px] border-3 border-[#ec4c46]" />
      <svg
        width="110"
        height="70"
        viewBox="0 0 110 70"
        aria-hidden="true"
        className="pointer-events-none absolute top-[630px] left-[325px] drop-shadow-[2px_3px_2px_rgba(0,0,0,0.45)]"
      >
        <path
          d="M7.300 5.700L40 7.700 35.500 16.500 98.500 52.300A5 5 0 0 1 93 61.300L30.700 25 25 33.300z"
          fill="#ec4c46"
        />
      </svg>
    </div>
  );
}
